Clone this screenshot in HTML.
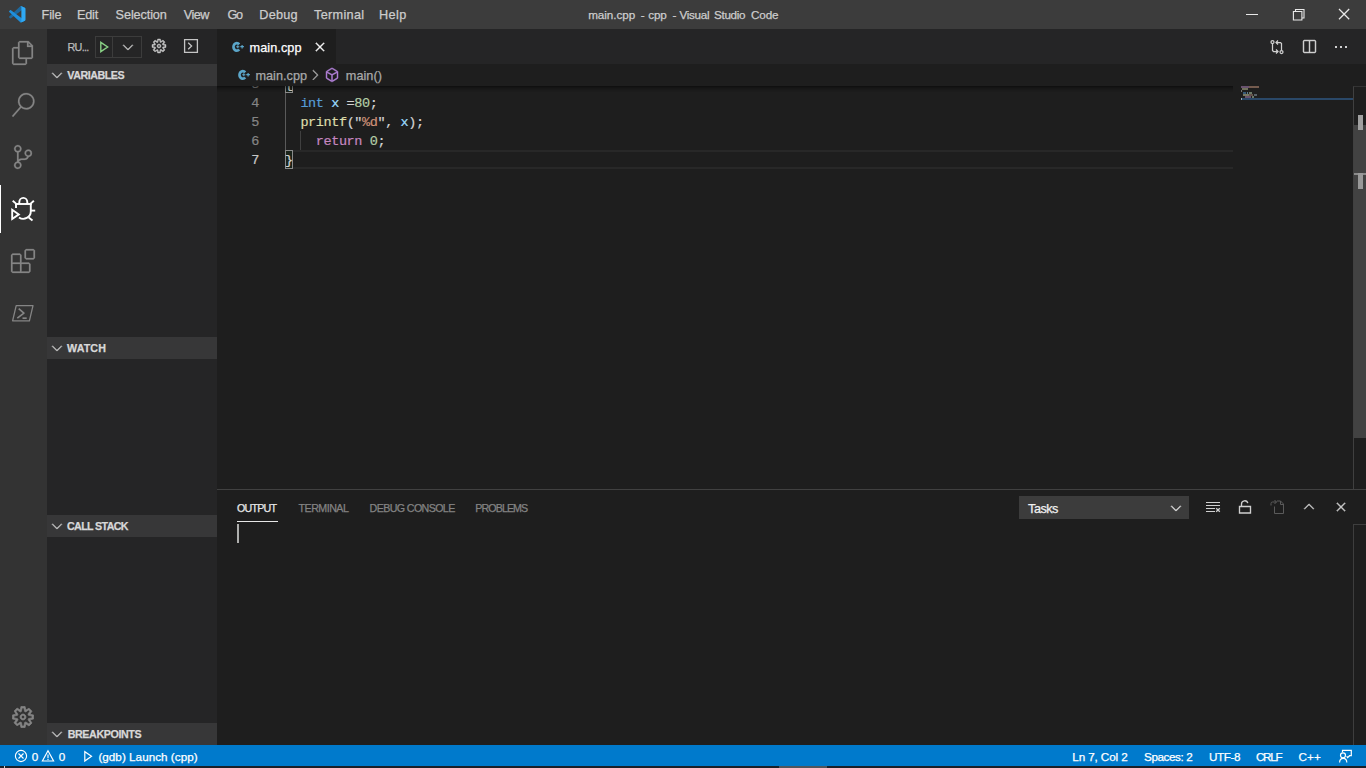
<!DOCTYPE html>
<html>
<head>
<meta charset="utf-8">
<title>main.cpp - cpp - Visual Studio Code</title>
<style>
html,body{margin:0;padding:0;background:#1e1e1e;overflow:hidden;}
body{width:1366px;height:768px;position:relative;font-family:"Liberation Sans",sans-serif;}
#root{position:absolute;left:0;top:0;width:1366px;height:768px;overflow:hidden;background:#1e1e1e;}
.a{position:absolute;}
.t{-webkit-text-stroke:0.250px;position:absolute;white-space:pre;line-height:20px;height:20px;font-family:"Liberation Sans",sans-serif;}
svg{position:absolute;overflow:visible;}
.code{-webkit-text-stroke:0.200px;margin-top:1px;position:absolute;white-space:pre;font-family:"Liberation Mono",monospace;font-size:13.5px;letter-spacing:-0.4px;line-height:19px;height:19px;color:#d4d4d4;}
.ln{-webkit-text-stroke:0.200px;margin-top:1px;position:absolute;white-space:pre;font-family:"Liberation Mono",monospace;font-size:13.5px;letter-spacing:-0.4px;line-height:19px;height:19px;color:#858585;text-align:right;width:40px;}
.sh{position:absolute;left:47px;width:170px;height:22px;background:#373738;}
</style>
</head>
<body>
<div id="root">

<!-- ===== title bar ===== -->
<div class="a" style="left:0;top:0;width:1366px;height:29px;background:#3c3c3c;"></div>
<!-- vscode logo -->
<svg style="left:9px;top:6px;" width="16.500" height="16.500" viewBox="0 0 100 100">
<path d="M96.461 10.796L75.857 0.876C73.472 -0.272 70.622 0.212 68.750 2.084L1.299 63.583C-0.515 65.237 -0.513 68.093 1.304 69.745L6.813 74.754C8.298 76.104 10.535 76.203 12.134 74.990L93.361 13.370C96.086 11.303 100 13.246 100 16.667V16.427C100 14.026 98.625 11.838 96.461 10.796Z" fill="#1773b4" opacity="0.800"/>
<path d="M96.461 89.204L75.857 99.124C73.472 100.272 70.622 99.788 68.750 97.916L1.299 36.417C-0.515 34.763 -0.513 31.907 1.304 30.255L6.813 25.246C8.298 23.896 10.535 23.797 12.134 25.010L93.361 86.630C96.086 88.697 100 86.754 100 83.333V83.573C100 85.974 98.625 88.162 96.461 89.204Z" fill="#1f8fdb"/>
<path d="M75.858 99.126C73.472 100.274 70.622 99.788 68.750 97.916C71.056 100.222 75 98.589 75 95.327V4.673C75 1.411 71.056 -0.222 68.750 2.084C70.622 0.212 73.472 -0.274 75.858 0.874L96.458 10.781C98.623 11.822 100 14.011 100 16.413V83.587C100 85.989 98.623 88.178 96.458 89.219L75.858 99.126Z" fill="#2fa9f4"/>
</svg>
<!-- window controls -->
<div class="a" style="left:1246px;top:14px;width:12px;height:1px;background:#e8e8e8;"></div>
<svg style="left:1292px;top:8px;" width="14" height="14" viewBox="0 0 14 14" fill="none" stroke="#e8e8e8" stroke-width="1.100">
<path d="M1.400 3.500h8.500v8.500h-8.500z"/><path d="M3.500 3.500v-2h8.500v8.500h-2"/>
</svg>
<svg style="left:1338px;top:8px;" width="12" height="12" viewBox="0 0 12 12" fill="none" stroke="#e8e8e8" stroke-width="1.250">
<path d="M1 1l10.200 10.200M11.200 1l-10.200 10.200"/>
</svg>

<!-- ===== activity bar ===== -->
<div class="a" style="left:0;top:29px;width:47px;height:716px;background:#333333;"></div>
<div class="a" style="left:0;top:185px;width:1px;height:48px;background:#ffffff;"></div>
<!-- files -->
<svg style="left:11px;top:41px;" width="24" height="24" viewBox="0 0 24 24" fill="#858585" stroke="#858585" stroke-width="0.25" stroke-linejoin="round">
<path d="M17.500 0h-9L7 1.500V6H2.500L1 7.500v15.070L2.500 24h12.070L16 22.570V18h4.700l1.300-1.430V4.500L17.500 0zm0 2.120l2.380 2.380H17.500V2.120zm-3 20.380h-12v-15H7v9.070L8.500 18h6v4.500zm6-6h-12v-15H16V6h4.500v10.500z"/>
</svg>
<!-- search -->
<svg style="left:11px;top:93px;" width="24" height="24" viewBox="0 0 24 24" fill="#858585" stroke="#858585" stroke-width="0.25" stroke-linejoin="round">
<path d="M15.250 0a8.250 8.250 0 0 0-6.180 13.720L1 22.880l1.120 1 8.050-9.120A8.251 8.251 0 1 0 15.250.010V0zm0 15a6.750 6.750 0 1 1 0-13.500 6.750 6.750 0 0 1 0 13.500z"/>
</svg>
<!-- source control -->
<svg style="left:11px;top:145px;" width="24" height="24" viewBox="0 0 24 24" fill="#858585" stroke="#858585" stroke-width="0.25" stroke-linejoin="round">
<path d="M21.007 8.222A3.738 3.738 0 0 0 15.045 5.200a3.737 3.737 0 0 0 1.156 6.583 2.988 2.988 0 0 1-2.668 1.670h-2.990a4.456 4.456 0 0 0-2.989 1.165V7.400a3.737 3.737 0 1 0-1.494 0v9.117a3.776 3.776 0 1 0 1.816.099 2.990 2.990 0 0 1 2.668-1.667h2.990a4.484 4.484 0 0 0 4.223-3.039 3.736 3.736 0 0 0 3.250-3.687zM4.565 3.738a2.242 2.242 0 1 1 4.484 0 2.242 2.242 0 0 1-4.484 0zm4.484 16.441a2.242 2.242 0 1 1-4.484 0 2.242 2.242 0 0 1 4.484 0zm8.221-9.715a2.242 2.242 0 1 1 0-4.485 2.242 2.242 0 0 1 0 4.485z"/>
</svg>
<!-- debug (active) -->
<svg style="left:6px;top:192px;" width="34" height="34" viewBox="6 192 34 34" fill="none" stroke="#ffffff" stroke-width="1.900" stroke-linecap="butt" stroke-linejoin="miter">
<path d="M19.300 204V202.200a4 4.300 0 0 1 8 0V204"/>
<path d="M15 204H31.700"/>
<path d="M16 204v4"/>
<path d="M30.800 204v7.200a7.500 7.600 0 0 1-11.800 6.200"/>
<path d="M12.700 200.700l3.600 3.200"/>
<path d="M33.900 200.700l-3.600 3.200"/>
<path d="M31 210.600H35.200"/>
<path d="M28.700 217.500l3.800 3.100"/>
<path d="M12.200 209.800v9.200l6.600-4.600z"/>
</svg>
<!-- extensions -->
<svg style="left:11px;top:249px;" width="24" height="24" viewBox="0 0 24 24" fill="#858585" stroke="#858585" stroke-width="0.25" stroke-linejoin="round">
<path d="M13.500 1.500L15 0h7.500L24 1.500V9l-1.500 1.500H15L13.500 9V1.500zm1.500 0V9h7.500V1.500H15zM0 15V6l1.500-1.500H9L10.500 6v7.500H18l1.500 1.500v7.500L18 24H1.500L0 22.500V15zm9-1.500V6H1.500v7.500H9zM9 15H1.500v7.500H9V15zm1.500 7.500H18V15h-7.500v7.500z"/>
</svg>
<!-- powershell -->
<svg style="left:11px;top:301px;" width="24" height="24" viewBox="0 0 24 24" fill="none" stroke="#858585" stroke-width="1.300" stroke-linejoin="round">
<path d="M5.200 4.600h16.800l-3.600 15.200H1.600z"/>
<path d="M7.700 7.600l5.200 4.500-6.600 5" stroke-width="1.700"/>
<path d="M11.500 17.200h4.200" stroke-width="1.700"/>
</svg>
<!-- settings gear -->
<svg style="left:11px;top:705px;" width="24" height="24" viewBox="0 0 16 16" fill="#858585" stroke="#858585" stroke-width="0.45" stroke-linejoin="round">
<path fill-rule="evenodd" d="M9.100 4.400L8.600 2H7.400l-.5 2.400-.7.300-2-1.300-.9.800 1.300 2-.2.700-2.400.5v1.200l2.400.5.300.8-1.300 2 .8.800 2-1.300.8.300.4 2.300h1.200l.5-2.400.8-.3 2 1.300.8-.8-1.300-2 .3-.8 2.300-.4V7.400l-2.400-.5-.3-.8 1.300-2-.8-.8-2 1.300-.7-.2zM9.400 1l.5 2.400L12 2.100l2 2-1.400 2.100 2.400.4v2.800l-2.400.5L14 12l-2 2-2.100-1.400-.5 2.400H6.600l-.5-2.400L4 13.900l-2-2 1.400-2.100L1 9.400V6.600l2.400-.5L2.100 4l2-2 2.100 1.400.4-2.400h2.800zm.6 7c0 1.100-.9 2-2 2s-2-.9-2-2 .9-2 2-2 2 .9 2 2zM8 9c.6 0 1-.4 1-1s-.4-1-1-1-1 .4-1 1 .4 1 1 1z"/>
</svg>

<!-- ===== sidebar ===== -->
<div class="a" style="left:47px;top:29px;width:170px;height:716px;background:#252526;"></div>
<div class="sh" style="top:64px;"></div>
<div class="sh" style="top:337px;"></div>
<div class="sh" style="top:515px;"></div>
<div class="sh" style="top:723px;"></div>
<!-- start debug box -->
<div class="a" style="left:95px;top:36px;width:45px;height:20px;border:1px solid #3c3c3c;"></div>
<div class="a" style="left:112px;top:37px;width:1px;height:20px;background:#3c3c3c;"></div>
<svg style="left:96px;top:39px;" width="16" height="16" viewBox="96 39 16 16" fill="none" stroke="#89d185" stroke-width="1.400" stroke-linejoin="miter">
<path d="M100.800 42.300V51.700L107.700 47z"/>
</svg>
<svg style="left:120px;top:39px;" width="16" height="16" viewBox="0 0 16 16" fill="#c5c5c5" stroke="#c5c5c5" stroke-width="0.45" stroke-linejoin="round">
<path d="M7.976 10.072l4.357-4.357.620.618L8.284 11h-.618L3 6.333l.619-.618 4.357 4.357z"/>
</svg>
<svg style="left:151px;top:38px;" width="16" height="16" viewBox="0 0 16 16" fill="#c5c5c5" stroke="#c5c5c5" stroke-width="0.45" stroke-linejoin="round">
<path fill-rule="evenodd" d="M9.100 4.400L8.600 2H7.400l-.5 2.400-.7.300-2-1.300-.9.800 1.300 2-.2.700-2.400.5v1.200l2.400.5.300.8-1.300 2 .8.800 2-1.300.8.300.4 2.300h1.200l.5-2.400.8-.3 2 1.300.8-.8-1.300-2 .3-.8 2.300-.4V7.400l-2.400-.5-.3-.8 1.300-2-.8-.8-2 1.300-.7-.2zM9.400 1l.5 2.400L12 2.100l2 2-1.400 2.100 2.400.4v2.800l-2.400.5L14 12l-2 2-2.100-1.400-.5 2.400H6.600l-.5-2.400L4 13.900l-2-2 1.400-2.100L1 9.400V6.600l2.400-.5L2.100 4l2-2 2.100 1.400.4-2.400h2.800zm.6 7c0 1.100-.9 2-2 2s-2-.9-2-2 .9-2 2-2 2 .9 2 2zM8 9c.6 0 1-.4 1-1s-.4-1-1-1-1 .4-1 1 .4 1 1 1z"/>
</svg>
<svg style="left:183px;top:38px;" width="16" height="16" viewBox="0 0 16 16" fill="none" stroke="#c5c5c5" stroke-width="1.300">
<path d="M1.600 1.600h12.800v12.800h-12.800z"/><path d="M5.200 4.800L8.600 8l-3.400 3.200" stroke-width="1.300"/>
</svg>
<!-- section chevrons -->
<svg style="left:48.600px;top:66.7px;" width="16" height="16" viewBox="0 0 16 16" fill="#c5c5c5" stroke="#c5c5c5" stroke-width="0.45" stroke-linejoin="round"><path d="M7.976 10.072l4.357-4.357.620.618L8.284 11h-.618L3 6.333l.619-.618 4.357 4.357z"/></svg>
<svg style="left:48.600px;top:339.7px;" width="16" height="16" viewBox="0 0 16 16" fill="#c5c5c5" stroke="#c5c5c5" stroke-width="0.45" stroke-linejoin="round"><path d="M7.976 10.072l4.357-4.357.620.618L8.284 11h-.618L3 6.333l.619-.618 4.357 4.357z"/></svg>
<svg style="left:48.600px;top:517.7px;" width="16" height="16" viewBox="0 0 16 16" fill="#c5c5c5" stroke="#c5c5c5" stroke-width="0.45" stroke-linejoin="round"><path d="M7.976 10.072l4.357-4.357.620.618L8.284 11h-.618L3 6.333l.619-.618 4.357 4.357z"/></svg>
<svg style="left:48.600px;top:725.7px;" width="16" height="16" viewBox="0 0 16 16" fill="#c5c5c5" stroke="#c5c5c5" stroke-width="0.45" stroke-linejoin="round"><path d="M7.976 10.072l4.357-4.357.620.618L8.284 11h-.618L3 6.333l.619-.618 4.357 4.357z"/></svg>

<!-- ===== editor tabs ===== -->
<div class="a" style="left:217px;top:29px;width:1149px;height:35px;background:#252526;"></div>
<div class="a" style="left:217px;top:29px;width:119px;height:35px;background:#1e1e1e;"></div>
<!-- C+ icon (tab) -->
<svg style="left:231px;top:41px;" width="14" height="12" viewBox="0 0 14 12" fill="none" stroke="#5ba6c9">
<path d="M8.200 3.300A3.300 3.800 0 1 0 8.200 8.500" stroke-width="2.700"/>
<path d="M5.200 5.800h3.200M6.800 4.300v3" stroke-width="1.100"/>
<path d="M9.300 5.700h3.600M11.100 3.900v3.600" stroke-width="1.200"/>
</svg>
<!-- tab close -->
<svg style="left:312px;top:39px;" width="16" height="16" viewBox="0 0 16 16" fill="#ffffff" stroke="#ffffff" stroke-width="0.45" stroke-linejoin="round"><path d="M8 8.707l3.646 3.647.708-.707L8.707 8l3.647-3.646-.707-.708L8 7.293 4.354 3.646l-.707.708L7.293 8l-3.646 3.646.707.708L8 8.707z"/></svg>
<!-- editor actions -->
<svg style="left:1269px;top:39px;" width="16" height="16" viewBox="0 0 16 16" fill="none" stroke="#d0d0d0" stroke-width="1.250">
<circle cx="3.500" cy="3" r="1.500"/><circle cx="12.500" cy="13" r="1.500"/>
<path d="M3.500 4.500v7l1 1H9"/><path d="M7 10.500l2 2-2 2"/>
<path d="M12.500 11.500v-7l-1-1H7"/><path d="M9 1.500l-2 2 2 2"/>
</svg>
<svg style="left:1301px;top:39px;" width="16" height="16" viewBox="0 0 16 16" fill="#d0d0d0" stroke="#d0d0d0" stroke-width="0.45" stroke-linejoin="round"><path d="M14 1H3L2 2v11l1 1h11l1-1V2l-1-1zM8 13H3V2h5v11zm6 0H9V2h5v11z"/></svg>
<div class="a" style="left:1335px;top:46px;width:2px;height:2px;background:#d0d0d0;"></div>
<div class="a" style="left:1340px;top:46px;width:2px;height:2px;background:#d0d0d0;"></div>
<div class="a" style="left:1345px;top:46px;width:2px;height:2px;background:#d0d0d0;"></div>

<!-- ===== breadcrumbs ===== -->
<svg style="left:237px;top:69px;" width="14" height="12" viewBox="0 0 14 12" fill="none" stroke="#5ba6c9">
<path d="M8.200 3.300A3.300 3.800 0 1 0 8.200 8.500" stroke-width="2.700"/>
<path d="M5.200 5.800h3.200M6.800 4.300v3" stroke-width="1.100"/>
<path d="M9.300 5.700h3.600M11.100 3.900v3.600" stroke-width="1.200"/>
</svg>
<svg style="left:307px;top:67px;" width="16" height="16" viewBox="0 0 16 16" fill="#a9a9a9" stroke="#a9a9a9" stroke-width="0.45" stroke-linejoin="round"><path d="M10.072 8.024L5.715 3.667l.618-.620L11 7.716v.618L6.333 13l-.618-.619 4.357-4.357z"/></svg>
<svg style="left:324px;top:67px;" width="16" height="16" viewBox="0 0 16 16" fill="#b180d7" stroke="#b180d7" stroke-width="0.45" stroke-linejoin="round"><path d="M13.510 4l-5-3h-1l-5 3-.490.860v6l.490.850 5 3h1l5-3 .490-.850v-6L13.510 4zm-6 9.560l-4.500-2.700V5.700l4.500 2.450v5.410zM3.270 4.700l4.740-2.840 4.740 2.840-4.740 2.590L3.270 4.700zm9.740 6.160l-4.500 2.700V8.150l4.500-2.450v5.160z"/></svg>

<!-- ===== editor body ===== -->
<div class="a" id="ed" style="left:217px;top:86px;width:1149px;height:403px;overflow:hidden;">
  <!-- coordinates inside are relative to (217,86) -->
  <!-- current line highlight (line 7: y 150..169) -->
  <div class="a" style="left:68px;top:64px;width:948px;height:15px;border-top:2px solid #282828;border-bottom:2px solid #282828;"></div>
  <!-- indent guides -->
  <div class="a" style="left:68px;top:7px;width:1px;height:57px;background:#5a5a5a;"></div>
  <div class="a" style="left:83px;top:45px;width:1px;height:19px;background:#404040;"></div>
  <!-- bracket boxes -->
  <div class="a" style="left:68px;top:-12px;width:8px;height:19px;border:1px solid #8a8a8a;box-sizing:border-box;background:#1a231a;"></div>
  <div class="a" style="left:68px;top:64px;width:8px;height:19px;border:1px solid #8a8a8a;box-sizing:border-box;background:#1a231a;"></div>
  <!-- line numbers -->
  <div class="ln" style="left:2px;top:-12px;">3</div>
  <div class="ln" style="left:2px;top:7px;">4</div>
  <div class="ln" style="left:2px;top:26px;">5</div>
  <div class="ln" style="left:2px;top:45px;">6</div>
  <div class="ln" style="left:2px;top:64px;color:#c6c6c6;">7</div>
  <!-- code -->
  <div class="code" style="left:68px;top:-12px;">{</div>
  <div class="code" style="left:68px;top:7px;">  <span style="color:#569cd6">int</span> <span style="color:#9cdcfe">x</span> =<span style="color:#b5cea8">80</span>;</div>
  <div class="code" style="left:68px;top:26px;">  <span style="color:#dcdcaa">printf</span>("<span style="color:#ce9178">%d</span>", <span style="color:#9cdcfe">x</span>);</div>
  <div class="code" style="left:68px;top:45px;">    <span style="color:#c586c0">return</span> <span style="color:#b5cea8">0</span>;</div>
  <div class="code" style="left:68px;top:64px;">}</div>
  <!-- top scroll shadow -->
  <div class="a" style="left:0;top:0;width:1016px;height:6px;box-shadow:#000000 0 6px 6px -6px inset;"></div>
  <!-- minimap -->
  <div class="a" style="left:1024px;top:12px;width:112px;height:2px;background:#2a4868;"></div>
  <div class="a" id="mm" style="left:1024px;top:0;width:30px;height:16px;">
    <div class="a" style="left:0;top:0;width:8px;height:2px;background:#7a5f82;opacity:.8"></div>
    <div class="a" style="left:8px;top:0;width:10px;height:2px;background:#8a6a5a;opacity:.8"></div>
    <div class="a" style="left:1px;top:2px;width:6px;height:2px;background:#85856b;opacity:.8"></div>
    <div class="a" style="left:0;top:4px;width:1px;height:2px;background:#8a8a8a;opacity:.8"></div>
    <div class="a" style="left:2px;top:6px;width:3px;height:2px;background:#3f6a90;opacity:.8"></div>
    <div class="a" style="left:6px;top:6px;width:1px;height:2px;background:#6c96b0;opacity:.8"></div>
    <div class="a" style="left:8px;top:6px;width:3px;height:2px;background:#80907a;opacity:.8"></div>
    <div class="a" style="left:2px;top:8px;width:6px;height:2px;background:#8f8f74;opacity:.8"></div>
    <div class="a" style="left:8px;top:8px;width:4px;height:2px;background:#80685c;opacity:.7"></div>
    <div class="a" style="left:13px;top:8px;width:3px;height:2px;background:#707c84;opacity:.7"></div>
    <div class="a" style="left:4px;top:10px;width:6px;height:2px;background:#7a5f82;opacity:.8"></div>
    <div class="a" style="left:11px;top:10px;width:2px;height:2px;background:#80907a;opacity:.8"></div>
    <div class="a" style="left:0;top:12px;width:1px;height:2px;background:#9aa8b8;"></div>
  </div>
  <!-- scrollbar / overview ruler -->
  <div class="a" style="left:1136px;top:0;width:13px;height:403px;border-left:1px solid #404040;border-top:1px solid #333333;box-sizing:border-box;"></div>
  <div class="a" style="left:1137px;top:39px;width:12px;height:313px;background:#424242;"></div>
  <div class="a" style="left:1141px;top:29px;width:5px;height:15px;background:#a0a0a0;"></div>
  <div class="a" style="left:1137px;top:87px;width:12px;height:2px;background:#8a8a8a;"></div>
  <div class="a" style="left:1141px;top:87px;width:5px;height:16px;background:#999999;"></div>
</div>

<!-- ===== panel ===== -->
<div class="a" style="left:217px;top:489px;width:1149px;height:1px;background:#414141;"></div>
<div class="a" style="left:237px;top:521px;width:41px;height:1px;background:#e7e7e7;"></div>
<div class="a" style="left:237px;top:524px;width:2px;height:19px;background:#aeafad;"></div>
<div class="a" style="left:1019px;top:496px;width:170px;height:23px;background:#3c3c3c;"></div>
<svg style="left:1168px;top:500px;" width="16" height="16" viewBox="0 0 16 16" fill="#e0e0e0" stroke="#e0e0e0" stroke-width="0.45" stroke-linejoin="round"><path d="M7.976 10.072l4.357-4.357.620.618L8.284 11h-.618L3 6.333l.619-.618 4.357 4.357z"/></svg>
<!-- clear output -->
<svg style="left:1205px;top:499px;" width="16" height="16" viewBox="0 0 16 16" fill="none" stroke="#d0d0d0" stroke-width="1.200">
<path d="M1 3.500h14M1 6.500h14M1 9.500h9M1 12.500h9"/>
<path d="M11.200 9.200l3.600 3.600M14.800 9.200l-3.600 3.600" stroke-width="1.300"/>
</svg>
<!-- lock -->
<svg style="left:1237px;top:499px;" width="16" height="16" viewBox="0 0 16 16" fill="none" stroke="#d0d0d0" stroke-width="1.350">
<path d="M2.500 7.500h11v6.500h-11z"/>
<path d="M4.500 7.500V5a3.200 3.200 0 0 1 6.300-.800"/>
</svg>
<!-- open log file (disabled) -->
<svg style="left:1269px;top:499px;" width="16" height="16" viewBox="0 0 16 16" fill="none" stroke="#5a5a5a" stroke-width="1">
<path d="M5.500 7.500v7h9v-9.500l-3-3h-3.500"/><path d="M11.500 2v3.500h3"/>
<path d="M2 6.500v-2a1.500 1.500 0 0 1 1.500-1.500h4"/><path d="M5.500 1l2 2-2 2"/>
</svg>
<svg style="left:1301px;top:499px;" width="16" height="16" viewBox="0 0 16 16" fill="#d0d0d0" stroke="#d0d0d0" stroke-width="0.45" stroke-linejoin="round"><path d="M8.024 5.928l-4.357 4.357-.620-.618L7.716 5h.618L13 9.667l-.619.618-4.357-4.357z"/></svg>
<svg style="left:1333px;top:499px;" width="16" height="16" viewBox="0 0 16 16" fill="#d0d0d0" stroke="#d0d0d0" stroke-width="0.45" stroke-linejoin="round"><path d="M8 8.707l3.646 3.647.708-.707L8.707 8l3.647-3.646-.707-.708L8 7.293 4.354 3.646l-.707.708L7.293 8l-3.646 3.646.707.708L8 8.707z"/></svg>
<!-- panel overview ruler border -->
<div class="a" style="left:1353px;top:524px;width:13px;height:221px;border-left:1px solid #3e3e3e;border-top:1px solid #3e3e3e;box-sizing:border-box;"></div>

<!-- ===== status bar ===== -->
<div class="a" style="left:0;top:745px;width:1366px;height:21px;background:#007acc;"></div>
<div class="a" style="left:0;top:766px;width:1366px;height:2px;background:#1a2029;"></div>
<div class="a" style="left:779px;top:766px;width:48px;height:2px;background:#4f565e;"></div>
<div class="a" style="left:4px;top:766px;width:1px;height:2px;background:#d0d0d0;"></div>
<!-- error icon -->
<svg style="left:14px;top:749px;" width="14" height="14" viewBox="0 0 14 14" fill="none" stroke="#ffffff" stroke-width="1.150">
<circle cx="7" cy="7" r="5.600"/><path d="M4.500 4.500l5 5M9.500 4.500l-5 5"/>
</svg>
<!-- warning icon -->
<svg style="left:41px;top:749px;" width="14" height="14" viewBox="0 0 14 14" fill="none" stroke="#ffffff" stroke-width="1.150" stroke-linejoin="miter">
<path d="M7 1.800L12.600 12H1.400z"/><path d="M7 5.400v3.600M7 9.800v1.300"/>
</svg>
<!-- debug play -->
<svg style="left:81px;top:749px;" width="14" height="14" viewBox="0 0 14 14" fill="none" stroke="#ffffff" stroke-width="1.200" stroke-linejoin="miter">
<path d="M3.800 2.700v9.300l6.700-4.650z"/>
</svg>
<!-- feedback -->
<svg style="left:1336px;top:746px;" width="20" height="20" viewBox="1336 746 20 20" fill="none" stroke="#ffffff" stroke-width="1.200" stroke-linejoin="miter">
<path d="M1342.500 752.300V750.300H1351.300V755.700H1349.600L1347.600 757.600L1346.700 756.200"/>
<circle cx="1343" cy="755.300" r="2.500"/>
<path d="M1339.600 762.600c0-2.600 1.500-4.300 3.600-4.300s3.600 1.700 3.600 4.300"/>
</svg>

<span class="t" style="left:41.60px;top:5.00px;font-size:12.7px;font-weight:400;color:#cccccc;letter-spacing:-0.163px;">File</span>
<span class="t" style="left:77.10px;top:5.00px;font-size:12.7px;font-weight:400;color:#cccccc;letter-spacing:-0.246px;">Edit</span>
<span class="t" style="left:115.60px;top:5.00px;font-size:12.7px;font-weight:400;color:#cccccc;letter-spacing:-0.117px;">Selection</span>
<span class="t" style="left:183.70px;top:5.00px;font-size:12.7px;font-weight:400;color:#cccccc;letter-spacing:-0.536px;">View</span>
<span class="t" style="left:227.40px;top:5.00px;font-size:12.7px;font-weight:400;color:#cccccc;letter-spacing:-1.269px;">Go</span>
<span class="t" style="left:259.30px;top:5.00px;font-size:12.7px;font-weight:400;color:#cccccc;letter-spacing:0.242px;">Debug</span>
<span class="t" style="left:314.00px;top:5.00px;font-size:12.7px;font-weight:400;color:#cccccc;letter-spacing:0.311px;">Terminal</span>
<span class="t" style="left:378.90px;top:5.00px;font-size:12.7px;font-weight:400;color:#cccccc;letter-spacing:0.454px;">Help</span>
<span class="t" style="left:588.20px;top:4.50px;font-size:11.7px;font-weight:400;color:#cccccc;letter-spacing:-0.060px;">main.cpp</span>
<span class="t" style="left:640.70px;top:4.50px;font-size:11.7px;font-weight:400;color:#cccccc;letter-spacing:0.000px;">-</span>
<span class="t" style="left:648.30px;top:4.50px;font-size:11.7px;font-weight:400;color:#cccccc;letter-spacing:-0.172px;">cpp</span>
<span class="t" style="left:672.40px;top:4.50px;font-size:11.7px;font-weight:400;color:#cccccc;letter-spacing:0.000px;">-</span>
<span class="t" style="left:679.40px;top:4.50px;font-size:11.7px;font-weight:400;color:#cccccc;letter-spacing:-0.305px;">Visual</span>
<span class="t" style="left:714.00px;top:4.50px;font-size:11.7px;font-weight:400;color:#cccccc;letter-spacing:-0.328px;">Studio</span>
<span class="t" style="left:751.00px;top:4.50px;font-size:11.7px;font-weight:400;color:#cccccc;letter-spacing:-0.147px;">Code</span>
<span class="t" style="left:67.50px;top:37.20px;font-size:10.8px;font-weight:400;color:#bbbbbb;letter-spacing:-0.698px;">RU...</span>
<span class="t" style="left:67.30px;top:64.80px;font-size:10.7px;font-weight:700;color:#d8d8d8;letter-spacing:-0.467px;">VARIABLES</span>
<span class="t" style="left:67.00px;top:337.80px;font-size:10.7px;font-weight:700;color:#d8d8d8;letter-spacing:0.133px;">WATCH</span>
<span class="t" style="left:67.00px;top:515.80px;font-size:10.7px;font-weight:700;color:#d8d8d8;letter-spacing:-0.640px;">CALL STACK</span>
<span class="t" style="left:67.70px;top:723.80px;font-size:10.7px;font-weight:700;color:#d8d8d8;letter-spacing:-0.386px;">BREAKPOINTS</span>
<span class="t" style="left:249.50px;top:37.70px;font-size:12.7px;font-weight:400;color:#ffffff;letter-spacing:0.082px;">main.cpp</span>
<span class="t" style="left:255.40px;top:65.50px;font-size:12.7px;font-weight:400;color:#a9a9a9;letter-spacing:0.025px;">main.cpp</span>
<span class="t" style="left:345.80px;top:65.50px;font-size:12.7px;font-weight:400;color:#a9a9a9;letter-spacing:0.035px;">main()</span>
<span class="t" style="left:236.90px;top:497.90px;font-size:10.7px;font-weight:400;color:#e7e7e7;letter-spacing:-0.761px;">OUTPUT</span>
<span class="t" style="left:298.60px;top:497.90px;font-size:10.7px;font-weight:400;color:#838383;letter-spacing:-0.542px;">TERMINAL</span>
<span class="t" style="left:369.60px;top:497.90px;font-size:10.7px;font-weight:400;color:#838383;letter-spacing:-0.626px;">DEBUG CONSOLE</span>
<span class="t" style="left:475.30px;top:497.90px;font-size:10.7px;font-weight:400;color:#838383;letter-spacing:-0.923px;">PROBLEMS</span>
<span class="t" style="left:1028.10px;top:498.70px;font-size:12.7px;font-weight:400;color:#f0f0f0;letter-spacing:-0.547px;">Tasks</span>
<span class="t" style="left:31.80px;top:746.70px;font-size:11.7px;font-weight:400;color:#ffffff;letter-spacing:0.000px;">0</span>
<span class="t" style="left:58.70px;top:746.70px;font-size:11.7px;font-weight:400;color:#ffffff;letter-spacing:0.000px;">0</span>
<span class="t" style="left:98.40px;top:746.70px;font-size:11.7px;font-weight:400;color:#ffffff;letter-spacing:0.026px;">(gdb) Launch (cpp)</span>
<span class="t" style="left:1072.30px;top:746.70px;font-size:11.7px;font-weight:400;color:#ffffff;letter-spacing:-0.113px;">Ln 7, Col 2</span>
<span class="t" style="left:1144.00px;top:746.70px;font-size:11.7px;font-weight:400;color:#ffffff;letter-spacing:-0.410px;">Spaces: 2</span>
<span class="t" style="left:1209.00px;top:746.70px;font-size:11.7px;font-weight:400;color:#ffffff;letter-spacing:-0.428px;">UTF-8</span>
<span class="t" style="left:1256.00px;top:746.70px;font-size:11.7px;font-weight:400;color:#ffffff;letter-spacing:-1.327px;">CRLF</span>
<span class="t" style="left:1298.60px;top:746.70px;font-size:11.7px;font-weight:400;color:#ffffff;letter-spacing:0.067px;">C++</span>
</div>
</body>
</html>
